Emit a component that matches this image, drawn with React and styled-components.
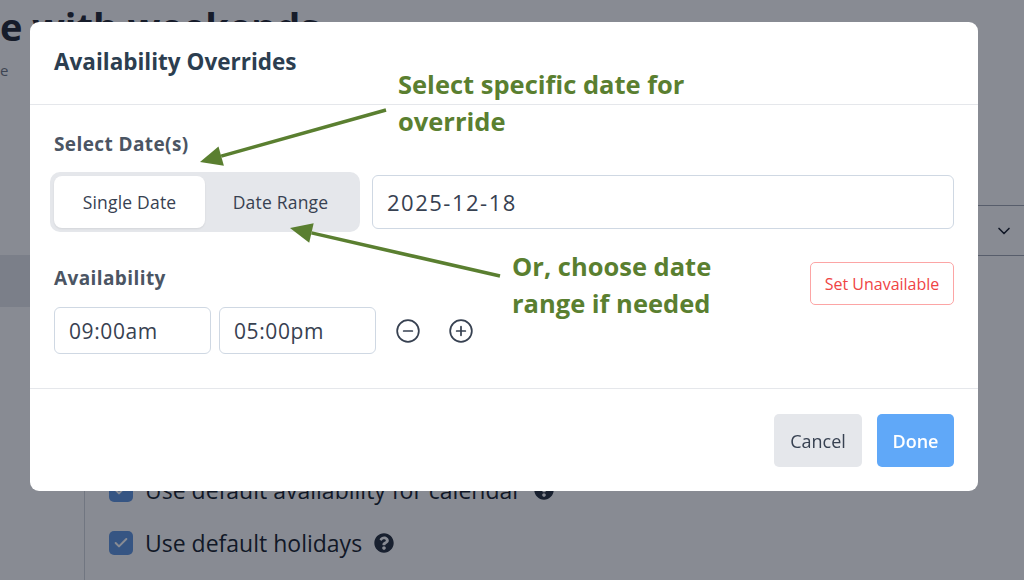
import React from 'react';
import styled, { createGlobalStyle } from 'styled-components';
import { CircleMinus, CirclePlus, ChevronDown, Check } from 'lucide-react';
import { FaQuestionCircle } from 'react-icons/fa';

const GlobalStyle = createGlobalStyle`
  * { box-sizing: border-box; }
  html, body { margin: 0; padding: 0; }
  body {
    width: 1024px;
    height: 580px;
    overflow: hidden;
    background: #ffffff;
    font-family: 'Open Sans', 'Noto Sans', sans-serif;
    color: #1f2937;
  }
`;

const Page = styled.div`
  width: 1024px;
  height: 580px;
  display: flex;
  flex-direction: column;
  overflow: hidden;
`;

const PageHeader = styled.header`
  height: 92px;
  padding-top: 6px;
  display: flex;
  flex-direction: column;
`;

const PageTitle = styled.h1`
  margin: 0;
  font-size: 38px;
  line-height: 40px;
  font-weight: 700;
  color: #1a202c;
  white-space: nowrap;
`;

const PageSub = styled.p`
  margin: 14px 0 0;
  font-size: 15px;
  line-height: 20px;
  color: #6b7280;
`;

const PageBody = styled.div`
  flex: 1;
  display: flex;
`;

const Sidebar = styled.nav`
  width: 85px;
  border-right: 1px solid #d1d5db;
  padding-top: 163px;
  display: flex;
  flex-direction: column;
`;

const NavItem = styled.div`
  height: 52px;
  background: ${(p) => (p.active ? '#e5e7eb' : 'transparent')};
`;

const Main = styled.main`
  flex: 1;
  display: flex;
  flex-direction: column;
  padding: 113px 0 0 24px;
`;

const SelectRow = styled.div`
  align-self: flex-end;
  width: 420px;
  height: 51px;
  border-top: 1px solid #9ca3af;
  border-bottom: 1px solid #9ca3af;
  display: flex;
  align-items: center;
  justify-content: flex-end;
  padding-right: 10px;
  color: #111827;
`;

const CheckList = styled.div`
  margin-top: 220px;
  display: flex;
  flex-direction: column;
  gap: 25px;
`;

const CheckRow = styled.label`
  display: flex;
  align-items: center;
  gap: 12px;
  font-size: 23px;
  line-height: 28px;
  color: #111827;
`;

const CheckBox = styled.span`
  width: 24px;
  height: 24px;
  border-radius: 5px;
  background: #5b93de;
  display: flex;
  align-items: center;
  justify-content: center;
  color: #ffffff;
`;

const Help = styled.span`
  display: flex;
  color: #1f2937;
  font-size: 20px;
`;

const Overlay = styled.div`
  position: fixed;
  inset: 0;
  background: rgba(17, 24, 39, 0.5);
  padding: 22px 0 0 30px;
`;

const Modal = styled.div`
  position: relative;
  width: 948px;
  background: #ffffff;
  border-radius: 9px;
  display: flex;
  flex-direction: column;
`;

const ModalHeader = styled.div`
  height: 83px;
  padding: 25px 24px 0;
  border-bottom: 1px solid #e5e7eb;
`;

const ModalTitle = styled.h2`
  margin: 0;
  font-size: 22.5px;
  line-height: 30px;
  font-weight: 700;
  color: #2c3e50;
`;

const ModalBody = styled.div`
  padding: 27px 24px 34px;
  border-bottom: 1px solid #e5e7eb;
  display: flex;
  flex-direction: column;
`;

const Label = styled.div`
  font-size: 19px;
  line-height: 24px;
  letter-spacing: 0.4px;
  font-weight: 700;
  color: #4b5563;
  padding-top: ${(p) => p.offset || 0}px;
`;

const DateRow = styled.div`
  margin-top: 16px;
  display: flex;
  align-items: center;
  gap: 12px;
`;

const Segment = styled.div`
  margin-left: -4px;
  padding: 4px;
  height: 60px;
  border-radius: 10px;
  background: #e5e7eb;
  display: flex;
`;

const SegButton = styled.button`
  width: 151px;
  height: 52px;
  border: none;
  border-radius: 8px;
  background: ${(p) => (p.active ? '#ffffff' : 'transparent')};
  box-shadow: ${(p) => (p.active ? '0 1px 2px rgba(0,0,0,0.08)' : 'none')};
  font-family: inherit;
  font-size: 17.5px;
  letter-spacing: 0.2px;
  color: #374151;
`;

const TextInput = styled.div`
  height: ${(p) => p.h || 54}px;
  width: ${(p) => (p.w ? `${p.w}px` : 'auto')};
  flex: ${(p) => (p.w ? 'none' : 1)};
  border: 1px solid #cfd8e3;
  border-radius: 6px;
  padding-left: 14px;
  display: flex;
  align-items: center;
  font-size: ${(p) => p.fs || 22}px;
  letter-spacing: ${(p) => p.ls || 1.5}px;
  color: #374151;
`;

const AvailHead = styled.div`
  margin-top: 30px;
  display: flex;
  justify-content: space-between;
  align-items: flex-start;
`;

const DangerButton = styled.button`
  width: 144px;
  height: 43px;
  border: 1px solid #fca5a5;
  border-radius: 5px;
  background: #ffffff;
  color: #ef4444;
  font-family: inherit;
  font-size: 16px;
`;

const TimeRow = styled.div`
  margin-top: 2px;
  display: flex;
  align-items: center;
  gap: 8px;
`;

const IconGroup = styled.div`
  margin-left: 11px;
  display: flex;
  gap: 27px;
  color: #374151;
`;

const ModalFooter = styled.div`
  height: 102px;
  padding: 25px 24px 0;
  display: flex;
  justify-content: flex-end;
  gap: 15px;
`;

const FooterButton = styled.button`
  height: 53px;
  width: ${(p) => p.w}px;
  border: none;
  border-radius: 5px;
  font-family: inherit;
  font-size: 18px;
  background: ${(p) => (p.primary ? '#60a8f8' : '#e5e7eb')};
  color: ${(p) => (p.primary ? '#ffffff' : '#374151')};
  font-weight: ${(p) => (p.primary ? 600 : 400)};
`;

const Note = styled.div`
  position: absolute;
  left: ${(p) => p.x}px;
  top: ${(p) => p.y}px;
  font-size: 25.5px;
  line-height: 37px;
  font-weight: 700;
  color: #5a7f30;
  white-space: nowrap;
`;

const Arrows = styled.svg`
  position: absolute;
  left: 0;
  top: 0;
  pointer-events: none;
`;

const Arrow = ({ x1, y1, x2, y2 }) => {
  const a = Math.atan2(y2 - y1, x2 - x1);
  const len = 22;
  const w = 10;
  const bx = x2 - len * Math.cos(a);
  const by = y2 - len * Math.sin(a);
  const px = -Math.sin(a) * w;
  const py = Math.cos(a) * w;
  return (
    <g fill="#5a7f30" stroke="#5a7f30">
      <line x1={x1} y1={y1} x2={bx} y2={by} strokeWidth="3.5" />
      <polygon points={`${x2},${y2} ${bx + px},${by + py} ${bx - px},${by - py}`} stroke="none" />
    </g>
  );
};

export default function App() {
  return (
    <>
      <GlobalStyle />
      <Page>
        <PageHeader>
          <PageTitle>e with weekends</PageTitle>
          <PageSub>e</PageSub>
        </PageHeader>
        <PageBody>
          <Sidebar>
            <NavItem active />
            <NavItem />
          </Sidebar>
          <Main>
            <SelectRow>
              <ChevronDown size={20} strokeWidth={2} />
            </SelectRow>
            <CheckList>
              <CheckRow>
                <CheckBox><Check size={16} strokeWidth={3} /></CheckBox>
                Use default availability for calendar
                <Help><FaQuestionCircle /></Help>
              </CheckRow>
              <CheckRow>
                <CheckBox><Check size={16} strokeWidth={3} /></CheckBox>
                Use default holidays
                <Help><FaQuestionCircle /></Help>
              </CheckRow>
            </CheckList>
          </Main>
        </PageBody>
      </Page>

      <Overlay>
        <Modal>
          <ModalHeader>
            <ModalTitle>Availability Overrides</ModalTitle>
          </ModalHeader>
          <ModalBody>
            <Label>Select Date(s)</Label>
            <DateRow>
              <Segment>
                <SegButton active>Single Date</SegButton>
                <SegButton>Date Range</SegButton>
              </Segment>
              <TextInput>2025-12-18</TextInput>
            </DateRow>
            <AvailHead>
              <Label offset={4}>Availability</Label>
              <DangerButton>Set Unavailable</DangerButton>
            </AvailHead>
            <TimeRow>
              <TextInput w={157} h={47} fs={21} ls={0.6}>09:00am</TextInput>
              <TextInput w={157} h={47} fs={21} ls={0.6}>05:00pm</TextInput>
              <IconGroup>
                <CircleMinus size={26} strokeWidth={1.6} />
                <CirclePlus size={26} strokeWidth={1.6} />
              </IconGroup>
            </TimeRow>
          </ModalBody>
          <ModalFooter>
            <FooterButton w={88}>Cancel</FooterButton>
            <FooterButton w={77} primary>Done</FooterButton>
          </ModalFooter>

          <Note x={368} y={44}>Select specific date for<br />override</Note>
          <Note x={482} y={226}>Or, choose date<br />range if needed</Note>
          <Arrows width="948" height="469">
            <Arrow x1={356} y1={88} x2={170} y2={140} />
            <Arrow x1={470} y1={254} x2={260} y2={206} />
          </Arrows>
        </Modal>
      </Overlay>
    </>
  );
}
